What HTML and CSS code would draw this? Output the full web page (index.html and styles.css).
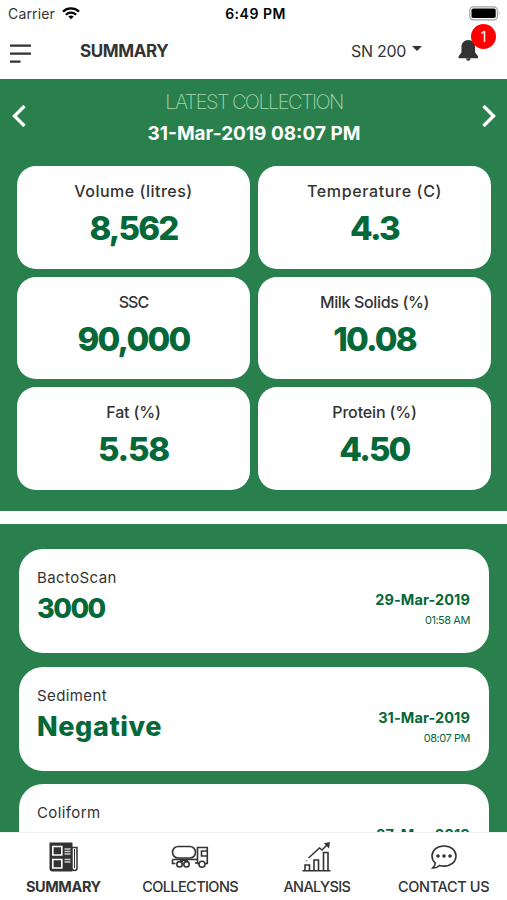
FILE: index.html
```
<!DOCTYPE html>
<html lang="en">
<head>
  <meta charset="UTF-8" />
  <meta name="viewport" content="width=device-width, initial-scale=1.0" />
  <title>Summary</title>
  <link rel="stylesheet" href="styles.css">
</head>
<body>
  <div class="status-bar">
    <div class="carrier">
      <span>Carrier</span>
      <svg width="18" height="13" viewBox="0 0 18 13" fill="none" stroke="#000" stroke-width="2.2">
        <path d="M1 4.600C5.400.4 12.600.4 17 4.600"/>
        <path d="M3.900 7.700C6.800 5 11.200 5 14.100 7.700"/>
        <path d="M6.300 9.600C7.900 8.200 10.100 8.200 11.700 9.600L9 12.300z" fill="#000" stroke="none"/>
      </svg>
    </div>
    <div class="clock">6:49 PM</div>
    <div class="battery">
      <svg width="32" height="15" viewBox="0 0 32 15">
        <rect x=".8" y=".8" width="27.600" height="13" rx="3.600" fill="#fff" stroke="#a0a0a0" stroke-width="1.200"/>
        <rect x="2.500" y="2.500" width="24.200" height="9.600" rx="1.800" fill="#000"/>
        <path d="M29.800 5.200q1.800 2.100 0 4.200z" fill="#888"/>
      </svg>
    </div>
  </div>

  <header class="top-bar">
    <svg class="menu" width="22" height="20" viewBox="0 0 22 20" stroke="#333" stroke-width="2.300">
      <path d="M0 1.700h21M0 9.700h21M0 17.700h10.500"/>
    </svg>
    <h1>SUMMARY</h1>
    <div class="account"><span>SN 200</span><i class="caret"></i></div>
    <div class="bell">
      <svg width="21" height="22" viewBox="0 0 21 22" fill="#333">
        <path d="M10.300 0c-4 0-6.800 3-6.800 7v5.600L.6 16.200v2h19.400v-2l-2.900-3.600V7c0-4-2.800-7-6.800-7zM8.100 18.600h4.500a2.250 2.250 0 0 1-4.500 0z"/>
      </svg>
      <span class="badge">1</span>
    </div>
  </header>

  <section class="latest">
    <div class="latest-head">
      <svg width="14" height="22" viewBox="0 0 14 22" fill="none" stroke="#fff" stroke-width="3.400"><path d="M12.500 1L2.500 11l10 10"/></svg>
      <div class="latest-title">
        <h2>LATEST COLLECTION</h2>
        <p>31-Mar-2019 08:07 PM</p>
      </div>
      <svg width="14" height="22" viewBox="0 0 14 22" fill="none" stroke="#fff" stroke-width="3.400"><path d="M1.500 1l10 10-10 10"/></svg>
    </div>
    <div class="tiles">
      <div class="tile volume"><h3>Volume (litres)</h3><p>8,562</p></div>
      <div class="tile temperature"><h3>Temperature (C)</h3><p>4.3</p></div>
      <div class="tile ssc"><h3>SSC</h3><p>90,000</p></div>
      <div class="tile solids"><h3>Milk Solids (%)</h3><p>10.08</p></div>
      <div class="tile fat"><h3>Fat (%)</h3><p>5.58</p></div>
      <div class="tile protein"><h3>Protein (%)</h3><p>4.50</p></div>
    </div>
  </section>

  <section class="tests">
    <div class="test">
      <div class="reading"><h3>BactoScan</h3><p class="count">3000</p></div>
      <div class="when"><b>29-Mar-2019</b><span>01:58 AM</span></div>
    </div>
    <div class="test">
      <div class="reading"><h3>Sediment</h3><p>Negative</p></div>
      <div class="when"><b>31-Mar-2019</b><span>08:07 PM</span></div>
    </div>
    <div class="test">
      <div class="reading"><h3>Coliform</h3></div>
      <div class="when"><b>27-Mar-2019</b></div>
    </div>
  </section>

  <nav class="tabs">
    <a class="tab active">
      <svg width="30" height="30" viewBox="0 0 30 30" fill="none" stroke="#333">
        <path d="M1.500 1.500h21v27h-19q-2 0-2-2z" fill="#333" stroke-width="2"/>
        <path d="M23 5.500h5v20.500q0 2.500-2.500 2.500T23 26z" fill="#fff" stroke-width="1.500"/>
        <path d="M25.500 7v19" stroke-width="1"/>
        <path d="M3.800 4.500h9v8.500h-9zM3.800 17.500h9V26h-9z" stroke="#fff" stroke-width="1.600"/>
        <path d="M15.500 7h6M15.500 9.500h6M15.500 12h6M15.500 17.500h6M15.500 20h6" stroke="#ccc" stroke-width="1.500"/>
      </svg>
      <span>SUMMARY</span>
    </a>
    <a class="tab collections">
      <svg width="38" height="24" viewBox="0 0 38 24" fill="none" stroke="#333" stroke-width="1.600">
        <rect x="1.500" y="1.500" width="23" height="11.500" rx="5.700"/>
        <path d="M26.500 15V2.500H36.300v16h-2M36 6h-5.500v5H36M1.500 14.500h25v3.500H24M26.500 14.500v4h2M1.500 14.500v4h3M9 14.500l2 2 2-2 2 2 2-2"/>
        <g fill="#fff"><circle cx="8.500" cy="19.300" r="2.700"/><circle cx="15.500" cy="19.300" r="2.700"/><circle cx="31" cy="19.300" r="3"/></g>
      </svg>
      <span>COLLECTIONS</span>
    </a>
    <a class="tab analysis">
      <svg width="29" height="30" viewBox="0 0 29 30" fill="none" stroke="#333" stroke-width="1.600">
        <path d="M.5 28.700h28M3 28.500v-5.500h4.500v5.500M12 28.500V18h4.500v10.500M21.500 28.500V10.500H26v18"/>
        <path d="M4.500 18.500v.8M6.500 16L17.500 6l2.500 2 6-6" stroke-width="1.500"/>
        <path d="M23.500 1.800l3.500-.8-.5 3.800z" fill="#333"/>
      </svg>
      <span>ANALYSIS</span>
    </a>
    <a class="tab contact">
      <svg width="27" height="24" viewBox="0 0 27 24" fill="none" stroke="#333" stroke-width="1.600">
        <path d="M14 1C6.800 1 2 5.300 2 11c0 3 1.300 5.400 3.300 7.200C5.200 20 4 21.500 2.600 23c2.800.2 5.200-.8 6.900-2.500 1.400.4 2.900.6 4.500.6 7.200 0 12-4.400 12-10.100S21.200 1 14 1z"/>
        <g fill="#333" stroke="none"><circle cx="8" cy="11" r="1.800"/><circle cx="14" cy="11" r="1.800"/><circle cx="20" cy="11" r="1.800"/></g>
      </svg>
      <span>CONTACT US</span>
    </a>
  </nav>
</body>
</html>
```
FILE: styles.css
```
* {
  box-sizing: border-box;
}
body {
  margin: 0;
  height: 900px;
  display: flex;
  flex-direction: column;
  overflow: hidden;
  background: #fff;
  color: #333;
  font-family: Inter, "Liberation Sans", sans-serif;
}
h1, h2, h3, p {
  margin: 0;
}
svg {
  display: block;
  flex: none;
}
.status-bar {
  height: 27px;
  flex: none;
  padding: 0 6px 0 8px;
  display: grid;
  grid-template-columns: 1fr auto 1fr;
  align-items: center;
  font-size: 14px;
}
.carrier {
  display: flex;
  align-items: center;
  gap: 7px;
  letter-spacing: 0.15px;
}
.clock {
  color: #000;
  font-weight: 600;
  letter-spacing: 0.5px;
  padding-left: 2px;
}
.battery {
  display: flex;
  justify-content: flex-end;
}
.top-bar {
  height: 52px;
  flex: none;
  display: flex;
  align-items: center;
  padding: 0 28px 4px 10px;
}
.menu {
  margin-top: 5px;
}
.top-bar h1 {
  margin-left: 48px;
  font-size: 17px;
  font-weight: 700;
  letter-spacing: -0.4px;
}
.account {
  display: flex;
  align-items: center;
  gap: 6px;
  margin-left: auto;
  margin-right: 37px;
  font-size: 16px;
  letter-spacing: -0.3px;
}
.caret {
  border: 5px solid transparent;
  border-top-color: #333;
  border-bottom: 0;
  margin-bottom: 5px;
}
.bell {
  position: relative;
}
.badge {
  position: absolute;
  left: 12px;
  top: -16px;
  width: 25px;
  height: 25px;
  border-radius: 50%;
  background: #f00;
  color: #fff;
  font-size: 14px;
  line-height: 25px;
  text-align: center;
}
.bell svg {
  margin-left: -1px;
}
.latest {
  height: 432px;
  flex: none;
  padding: 0 16px 0 17px;
  background: #2a804d;
}
.latest-head {
  height: 87px;
  margin: 0 -5px;
  display: flex;
  justify-content: space-between;
  align-items: flex-start;
}
.latest-head > svg {
  margin-top: 26px;
}
.latest-title {
  padding-top: 8px;
  text-align: center;
}
.latest-title h2 {
  font-size: 20px;
  line-height: 30px;
  font-weight: 200;
  letter-spacing: -1.55px;
  color: #a5d6b0;
}
.latest-title p {
  font-size: 19px;
  line-height: 33px;
  font-weight: 700;
  color: #fff;
}
.tiles {
  display: grid;
  grid-template-columns: 1fr 1fr;
  grid-auto-rows: 102.500px;
  gap: 8px;
}
.tile {
  padding-top: 12px;
  border-radius: 19px;
  background: #fff;
  text-align: center;
}
.tile h3 {
  font-size: 16px;
  line-height: 26px;
  font-weight: 450;
}
.tile p {
  font-size: 33px;
  line-height: 49px;
  font-weight: 800;
  letter-spacing: -1.8px;
  color: #056839;
}
.volume h3 { letter-spacing: 0.5px; }
.temperature h3 { letter-spacing: 0.65px; }
.ssc h3 { letter-spacing: -0.9px; }
.solids h3 { letter-spacing: -0.35px; }
.fat h3, .protein h3 { letter-spacing: -0.15px; }
.fat p { letter-spacing: -1.2px; }
.tests {
  flex: 1;
  min-height: 0;
  overflow: hidden;
  margin-top: 13px;
  padding: 25px 18px 0 19px;
  display: flex;
  flex-direction: column;
  gap: 13.500px;
  background: #2a804d;
}
.test {
  height: 104px;
  flex: none;
  padding: 16px 19px 0 18px;
  display: flex;
  justify-content: space-between;
  border-radius: 24px;
  background: #fff;
}
.reading h3 {
  font-size: 15px;
  line-height: 26px;
  font-weight: 400;
  letter-spacing: 0.4px;
}
.reading p {
  font-size: 27px;
  line-height: 36px;
  font-weight: 800;
  letter-spacing: 0.6px;
  color: #056839;
}
.reading .count {
  letter-spacing: -1.5px;
}
.when {
  padding-top: 24px;
  text-align: right;
  color: #056839;
}
.when b {
  display: block;
  font-size: 14.500px;
  line-height: 22px;
  letter-spacing: 0.1px;
}
.when span {
  display: block;
  font-size: 11px;
  line-height: 18px;
  letter-spacing: -0.45px;
}
.tabs {
  height: 68px;
  flex: none;
  display: grid;
  grid-template-columns: repeat(4, 1fr);
  border-top: 1px solid #f0f0f0;
}
.tab {
  display: flex;
  flex-direction: column;
  align-items: center;
  justify-content: space-between;
  padding: 9px 0 4px;
  font-size: 14.500px;
  line-height: 19px;
  font-weight: 450;
  letter-spacing: -0.6px;
  white-space: nowrap;
}
.active {
  font-weight: 700;
  letter-spacing: -0.4px;
}
.active svg {
  margin-left: 2px;
}
.collections, .contact {
  padding-top: 12px;
}
.contact {
  letter-spacing: -0.35px;
}
```
